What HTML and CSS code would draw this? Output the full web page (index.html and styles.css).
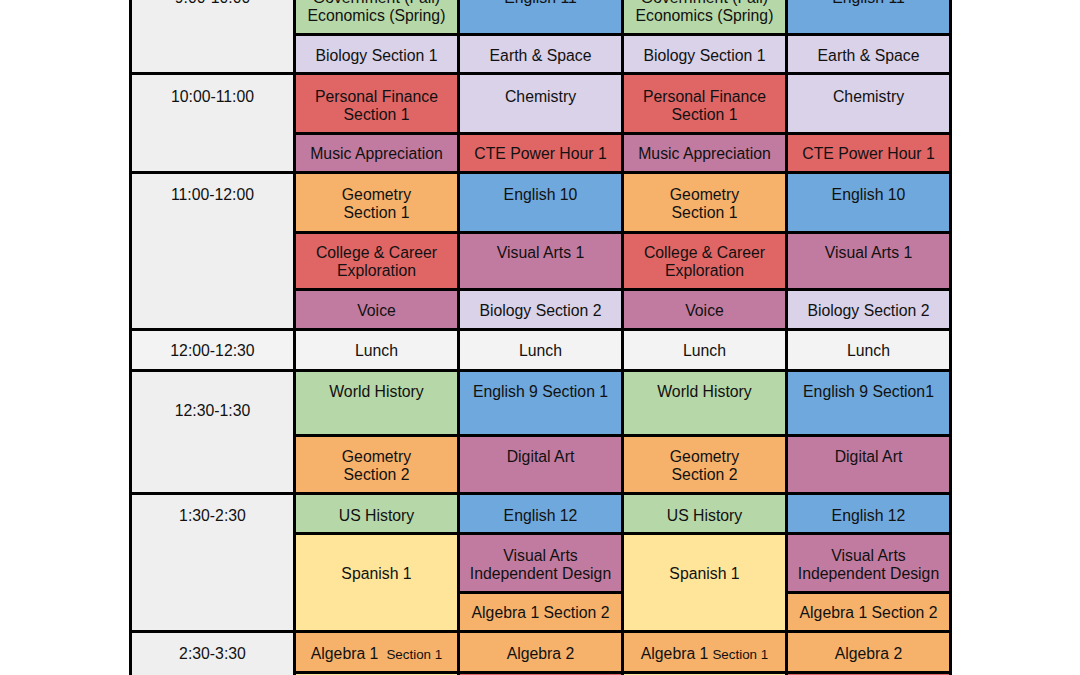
FILE: index.html
```html
<!DOCTYPE html>
<html lang="en">
<head>
<meta charset="utf-8">
<title>Class Schedule</title>
<link rel="stylesheet" href="styles.css">
</head>
<body>
<div class="schedule">
  <div class="block r-910">
    <div class="cell time pt13">9:00-10:00</div>
    <div class="cell green pt13">Government (Fall)<br>Economics (Spring)</div>
    <div class="cell blue pt13">English 11</div>
    <div class="cell green pt13">Government (Fall)<br>Economics (Spring)</div>
    <div class="cell blue pt13">English 11</div>
    <div class="cell lav">Biology Section 1</div>
    <div class="cell lav">Earth &amp; Space</div>
    <div class="cell lav">Biology Section 1</div>
    <div class="cell lav">Earth &amp; Space</div>
  </div>
  <div class="block r-1011">
    <div class="cell time pt13">10:00-11:00</div>
    <div class="cell red pt13">Personal Finance<br>Section 1</div>
    <div class="cell lav pt13">Chemistry</div>
    <div class="cell red pt13">Personal Finance<br>Section 1</div>
    <div class="cell lav pt13">Chemistry</div>
    <div class="cell mauve pt10">Music Appreciation</div>
    <div class="cell red pt10">CTE Power Hour 1</div>
    <div class="cell mauve pt10">Music Appreciation</div>
    <div class="cell red pt10">CTE Power Hour 1</div>
  </div>
  <div class="block r-1112">
    <div class="cell time pt12">11:00-12:00</div>
    <div class="cell orange pt12">Geometry<br>Section 1</div>
    <div class="cell blue pt12">English 10</div>
    <div class="cell orange pt12">Geometry<br>Section 1</div>
    <div class="cell blue pt12">English 10</div>
    <div class="cell red pt10">College &amp; Career<br>Exploration</div>
    <div class="cell mauve pt10">Visual Arts 1</div>
    <div class="cell red pt10">College &amp; Career<br>Exploration</div>
    <div class="cell mauve pt10">Visual Arts 1</div>
    <div class="cell mauve">Voice</div>
    <div class="cell lav">Biology Section 2</div>
    <div class="cell mauve">Voice</div>
    <div class="cell lav">Biology Section 2</div>
  </div>
  <div class="block r-lunch">
    <div class="cell time lunch">12:00-12:30</div>
    <div class="cell lunch">Lunch</div>
    <div class="cell lunch">Lunch</div>
    <div class="cell lunch">Lunch</div>
    <div class="cell lunch">Lunch</div>
  </div>
  <div class="block r-1230">
    <div class="cell time low">12:30-1:30</div>
    <div class="cell green">World History</div>
    <div class="cell blue">English 9 Section 1</div>
    <div class="cell green">World History</div>
    <div class="cell blue">English 9 Section1</div>
    <div class="cell orange">Geometry<br>Section 2</div>
    <div class="cell mauve">Digital Art</div>
    <div class="cell orange">Geometry<br>Section 2</div>
    <div class="cell mauve">Digital Art</div>
  </div>
  <div class="block r-130">
    <div class="cell time pt12">1:30-2:30</div>
    <div class="cell green pt12">US History</div>
    <div class="cell blue pt12">English 12</div>
    <div class="cell green pt12">US History</div>
    <div class="cell blue pt12">English 12</div>
    <div class="cell yellow span2 low">Spanish 1</div>
    <div class="cell mauve pt12">Visual Arts<br>Independent Design</div>
    <div class="cell yellow span2 low">Spanish 1</div>
    <div class="cell mauve pt12">Visual Arts<br>Independent Design</div>
    <div class="cell orange pt10">Algebra 1 Section 2</div>
    <div class="cell orange pt10">Algebra 1 Section 2</div>
  </div>
  <div class="block r-230">
    <div class="cell time pt12">2:30-3:30</div>
    <div class="cell orange pt12">Algebra 1<span class="sec wide">Section 1</span></div>
    <div class="cell orange pt12">Algebra 2</div>
    <div class="cell orange pt12">Algebra 1<span class="sec">Section 1</span></div>
    <div class="cell orange pt12">Algebra 2</div>
    <div class="cell yellow"></div>
    <div class="cell red"></div>
    <div class="cell yellow"></div>
    <div class="cell red"></div>
  </div>
</div>
</body>
</html>
```

FILE: styles.css
```css
* {
  box-sizing: border-box;
}

html,
body {
  margin: 0;
  padding: 0;
  background: #ffffff;
}

body {
  overflow: hidden;
  font-family: "Liberation Sans", Arial, sans-serif;
}

.schedule {
  width: 823px;
  margin: -27px 0 0 129px;
  padding: 3px;
  background: #000000;
  display: flex;
  flex-direction: column;
  gap: 3px;
}

.block {
  display: grid;
  grid-template-columns: repeat(5, 161px);
  gap: 3px;
}

.r-910 { grid-template-rows: 57px 36px; }
.r-1011 { grid-template-rows: 57px 36px; }
.r-1112 { grid-template-rows: 57px 54px 37px; }
.r-lunch { grid-template-rows: 38px; }
.r-1230 { grid-template-rows: 62px 55px; }
.r-130 { grid-template-rows: 37px 56px 36px; }
.r-230 { grid-template-rows: 38px 36px; }

.cell {
  padding: 11px 2px 0;
  text-align: center;
  font-size: 15.8px;
  line-height: 18px;
  color: #111111;
  white-space: nowrap;
}

.pt10 { padding-top: 10px; }
.pt12 { padding-top: 12px; }
.pt13 { padding-top: 13px; }

.time {
  grid-row: 1 / -1;
  background: #efefef;
}

.low {
  padding-top: 30px;
}

.span2 {
  grid-row: span 2;
}

.sec {
  font-size: 13.4px;
  margin-left: 4px;
}

.sec.wide {
  margin-left: 8px;
}

.green { background: #b6d7a8; }
.blue { background: #6fa8dc; }
.lav { background: #d9d2e9; }
.red { background: #e06666; }
.mauve { background: #c27ba0; }
.orange { background: #f6b26b; }
.yellow { background: #ffe599; }
.lunch { background: #f3f3f3; }
```
